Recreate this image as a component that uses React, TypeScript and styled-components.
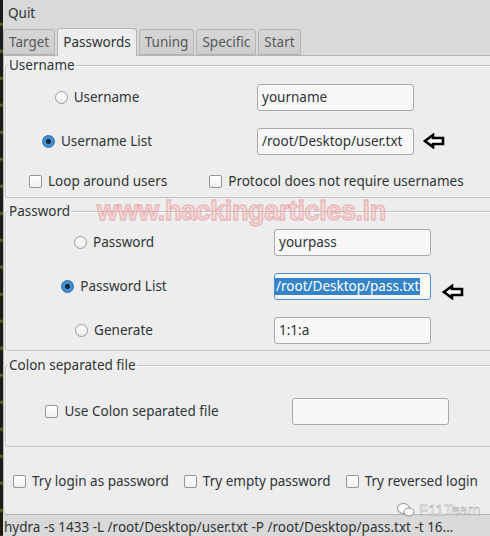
import styled, { createGlobalStyle } from "styled-components";

const GlobalStyle = createGlobalStyle`
  html, body {
    margin: 0;
    padding: 0;
    background: #d9d9d9;
    overflow: hidden;
  }
  body {
    font-family: "Noto Sans", "DejaVu Sans", sans-serif;
    font-size: 13.5px;
    color: #2e3436;
  }
`;

const Window = styled.div`
  position: relative;
  width: 490px;
  height: 536px;
  display: flex;
  background: #d9d9d9;
  overflow: hidden;
`;

const LeftStrip = styled.div`
  width: 3px;
  flex: none;
  background: repeating-linear-gradient(
    180deg,
    #1c1c16 0px,
    #1c1c16 22px,
    #6b6a2c 24px,
    #1c1c16 27px
  );
`;

const Main = styled.div`
  flex: 1;
  display: flex;
  flex-direction: column;
  padding-right: 3px;
`;

const MenuBar = styled.div`
  height: 27px;
  display: flex;
  align-items: center;
  padding-left: 5px;
  line-height: 17px;
`;

const TabBar = styled.div`
  height: 28px;
  display: flex;
  align-items: flex-end;
  gap: 2px;
  position: relative;
  z-index: 1;
`;

const Tab = styled.div<{ $active?: boolean }>`
  height: ${(p) => (p.$active ? "28px" : "26px")};
  box-sizing: border-box;
  padding: 0 5px ${(p) => (p.$active ? "2px" : "1px")};
  display: flex;
  align-items: center;
  border: 1px solid #b4b4b4;
  border-bottom: ${(p) => (p.$active ? "none" : "1px solid #b4b4b4")};
  border-radius: 3px 3px 0 0;
  background: ${(p) =>
    p.$active ? "#ededed" : "linear-gradient(#d6d6d6, #cdcdcd)"};
  color: ${(p) => (p.$active ? "#2e3436" : "#555a5a")};
  margin-bottom: ${(p) => (p.$active ? "-1px" : "0")};
`;

const Panel = styled.div`
  height: 460px;
  box-sizing: border-box;
  border: 1px solid #b4b4b4;
  border-radius: 0 4px 4px 4px;
  background: #ededed;
  padding: 1px 0 0 1px;
  display: flex;
  flex-direction: column;
`;

const Frame = styled.fieldset<{ $top: number; $bottom: number; $gap?: number }>`
  margin: ${(p) => p.$gap ?? 0}px 0 0 0;
  border: 1px solid #c3c3c3;
  border-radius: 3px;
  box-shadow: inset 1px 1px 0 #fafafa;
  padding: ${(p) => p.$top}px 0 ${(p) => p.$bottom}px 0;
  min-width: 0;
`;

const Legend = styled.legend`
  padding: 0 1px;
  margin-left: 2px;
  line-height: 17px;
  height: 17px;
  color: #2e3436;
`;

const OptionGrid = styled.div<{ $indent: number }>`
  display: grid;
  grid-template-columns: 182px 157px auto;
  column-gap: 69px;
  row-gap: 17px;
  grid-auto-rows: 27px;
  padding-left: ${(p) => p.$indent}px;
  align-items: center;
`;

const Choice = styled.label`
  justify-self: center;
  display: flex;
  align-items: center;
  gap: 6px;
  line-height: 17px;
  white-space: nowrap;
`;

const Radio = styled.span<{ $checked?: boolean }>`
  width: 13px;
  height: 13px;
  box-sizing: border-box;
  border-radius: 50%;
  border: 1px solid ${(p) => (p.$checked ? "#2b6aa3" : "#9a9a9a")};
  background: ${(p) =>
    p.$checked
      ? "radial-gradient(circle, #1c2a38 0 2.2px, #3f8fd2 2.8px)"
      : "linear-gradient(#ffffff, #ececec)"};
  flex: none;
`;

const Check = styled.span`
  width: 13px;
  height: 13px;
  box-sizing: border-box;
  border-radius: 2px;
  border: 1px solid #959595;
  background: linear-gradient(#ffffff, #f0f0f0);
  flex: none;
`;

const Field = styled.div<{ $focused?: boolean }>`
  width: 157px;
  height: 27px;
  box-sizing: border-box;
  border: 1px solid ${(p) => (p.$focused ? "#4a90d9" : "#a8a8a8")};
  border-radius: 3px;
  background: #f7f7f7;
  display: flex;
  align-items: center;
  padding-left: ${(p) => (p.$focused ? "1px" : "4px")};
  overflow: hidden;
  white-space: nowrap;
  line-height: 17px;
  color: #2e3436;
`;

const Selected = styled.span`
  background: #3584c8;
  color: #ffffff;
  padding: 0 1px;
  margin-left: -1px;
`;

const ArrowWrap = styled.div<{ $shift: number; $nudge: number }>`
  display: flex;
  margin-left: ${(p) => p.$shift}px;
  transform: translateY(${(p) => p.$nudge}px);
`;

const CheckRow = styled.div<{ $indent: number; $gap: number }>`
  display: flex;
  align-items: center;
  height: 27px;
  margin-top: 13px;
  padding-left: ${(p) => p.$indent}px;
  gap: ${(p) => p.$gap}px;
`;

const BottomRow = styled.div`
  flex: 1;
  display: flex;
  align-items: center;
  gap: 15px;
  padding: 1px 0 0 8px;
`;

const StatusBar = styled.div`
  flex: 1;
  display: flex;
  align-items: center;
  padding: 3px 0 0 1px;
  white-space: nowrap;
  overflow: hidden;
  line-height: 17px;
  color: #2e3436;
`;

const Watermark = styled.div`
  position: absolute;
  left: 97px;
  top: 196px;
  font-family: "Liberation Sans", Arial, sans-serif;
  font-weight: 700;
  font-size: 27px;
  letter-spacing: -0.4px;
  color: rgba(246, 200, 200, 0.5);
  -webkit-text-stroke: 1.4px rgba(228, 130, 135, 0.45);
  pointer-events: none;
`;

const Signature = styled.div`
  position: absolute;
  left: 397px;
  top: 501px;
  display: flex;
  align-items: center;
  gap: 4px;
  font-family: "Liberation Sans", Arial, sans-serif;
  font-size: 15px;
  line-height: 17px;
  color: rgba(255, 255, 255, 0.9);
  -webkit-text-stroke: 0.4px rgba(110, 110, 110, 0.8);
  pointer-events: none;
`;

const Arrow = () => (
  <svg width="22" height="16" viewBox="0 0 22 16">
    <path
      d="M2 8 L10 2 L10 5 L20 5 L20 11 L10 11 L10 14 Z"
      fill="#ffffff"
      stroke="#000000"
      strokeWidth="2.6"
      strokeLinejoin="miter"
    />
  </svg>
);

const ChatIcon = () => (
  <svg width="18" height="14" viewBox="0 0 18 14">
    <ellipse cx="6.5" cy="5.5" rx="6" ry="5" fill="rgba(252,252,252,0.9)" stroke="rgba(110,110,110,0.75)" />
    <ellipse cx="12" cy="9" rx="5" ry="4" fill="rgba(252,252,252,0.9)" stroke="rgba(110,110,110,0.75)" />
  </svg>
);

export default function App() {
  return (
    <Window>
      <GlobalStyle />
      <LeftStrip />
      <Main>
        <MenuBar>Quit</MenuBar>
        <TabBar>
          <Tab>Target</Tab>
          <Tab $active>Passwords</Tab>
          <Tab>Tuning</Tab>
          <Tab>Specific</Tab>
          <Tab>Start</Tab>
        </TabBar>
        <Panel>
          <Frame $top={10} $bottom={2}>
            <Legend>Username</Legend>
            <OptionGrid $indent={0}>
              <Choice>
                <Radio />
                Username
              </Choice>
              <Field>yourname</Field>
              <span />
              <Choice>
                <Radio $checked />
                Username List
              </Choice>
              <Field>/root/Desktop/user.txt</Field>
              <ArrowWrap $shift={-60} $nudge={-1}>
                <Arrow />
              </ArrowWrap>
            </OptionGrid>
            <CheckRow $indent={23} $gap={42}>
              <Choice>
                <Check />
                Loop around users
              </Choice>
              <Choice>
                <Check />
                Protocol does not require usernames
              </Choice>
            </CheckRow>
          </Frame>

          <Frame $top={9} $bottom={6} $gap={5}>
            <Legend>Password</Legend>
            <OptionGrid $indent={17}>
              <Choice>
                <Radio />
                Password
              </Choice>
              <Field>yourpass</Field>
              <span />
              <Choice>
                <Radio $checked />
                Password List
              </Choice>
              <Field $focused>
                <Selected>/root/Desktop/pass.txt</Selected>
              </Field>
              <ArrowWrap $shift={-58} $nudge={5}>
                <Arrow />
              </ArrowWrap>
              <Choice>
                <Radio />
                Generate
              </Choice>
              <Field>1:1:a</Field>
              <span />
            </OptionGrid>
          </Frame>

          <Frame $top={24} $bottom={21} $gap={6}>
            <Legend>Colon separated file</Legend>
            <OptionGrid $indent={35}>
              <Choice>
                <Check />
                Use Colon separated file
              </Choice>
              <Field />
            </OptionGrid>
          </Frame>

          <BottomRow>
            <Choice>
              <Check />
              Try login as password
            </Choice>
            <Choice>
              <Check />
              Try empty password
            </Choice>
            <Choice>
              <Check />
              Try reversed login
            </Choice>
          </BottomRow>
        </Panel>
        <StatusBar>
          hydra -s 1433 -L /root/Desktop/user.txt -P /root/Desktop/pass.txt -t 16...
        </StatusBar>
      </Main>
      <Watermark>www.hackingarticles.in</Watermark>
      <Signature>
        <ChatIcon />
        F11Team
      </Signature>
    </Window>
  );
}
